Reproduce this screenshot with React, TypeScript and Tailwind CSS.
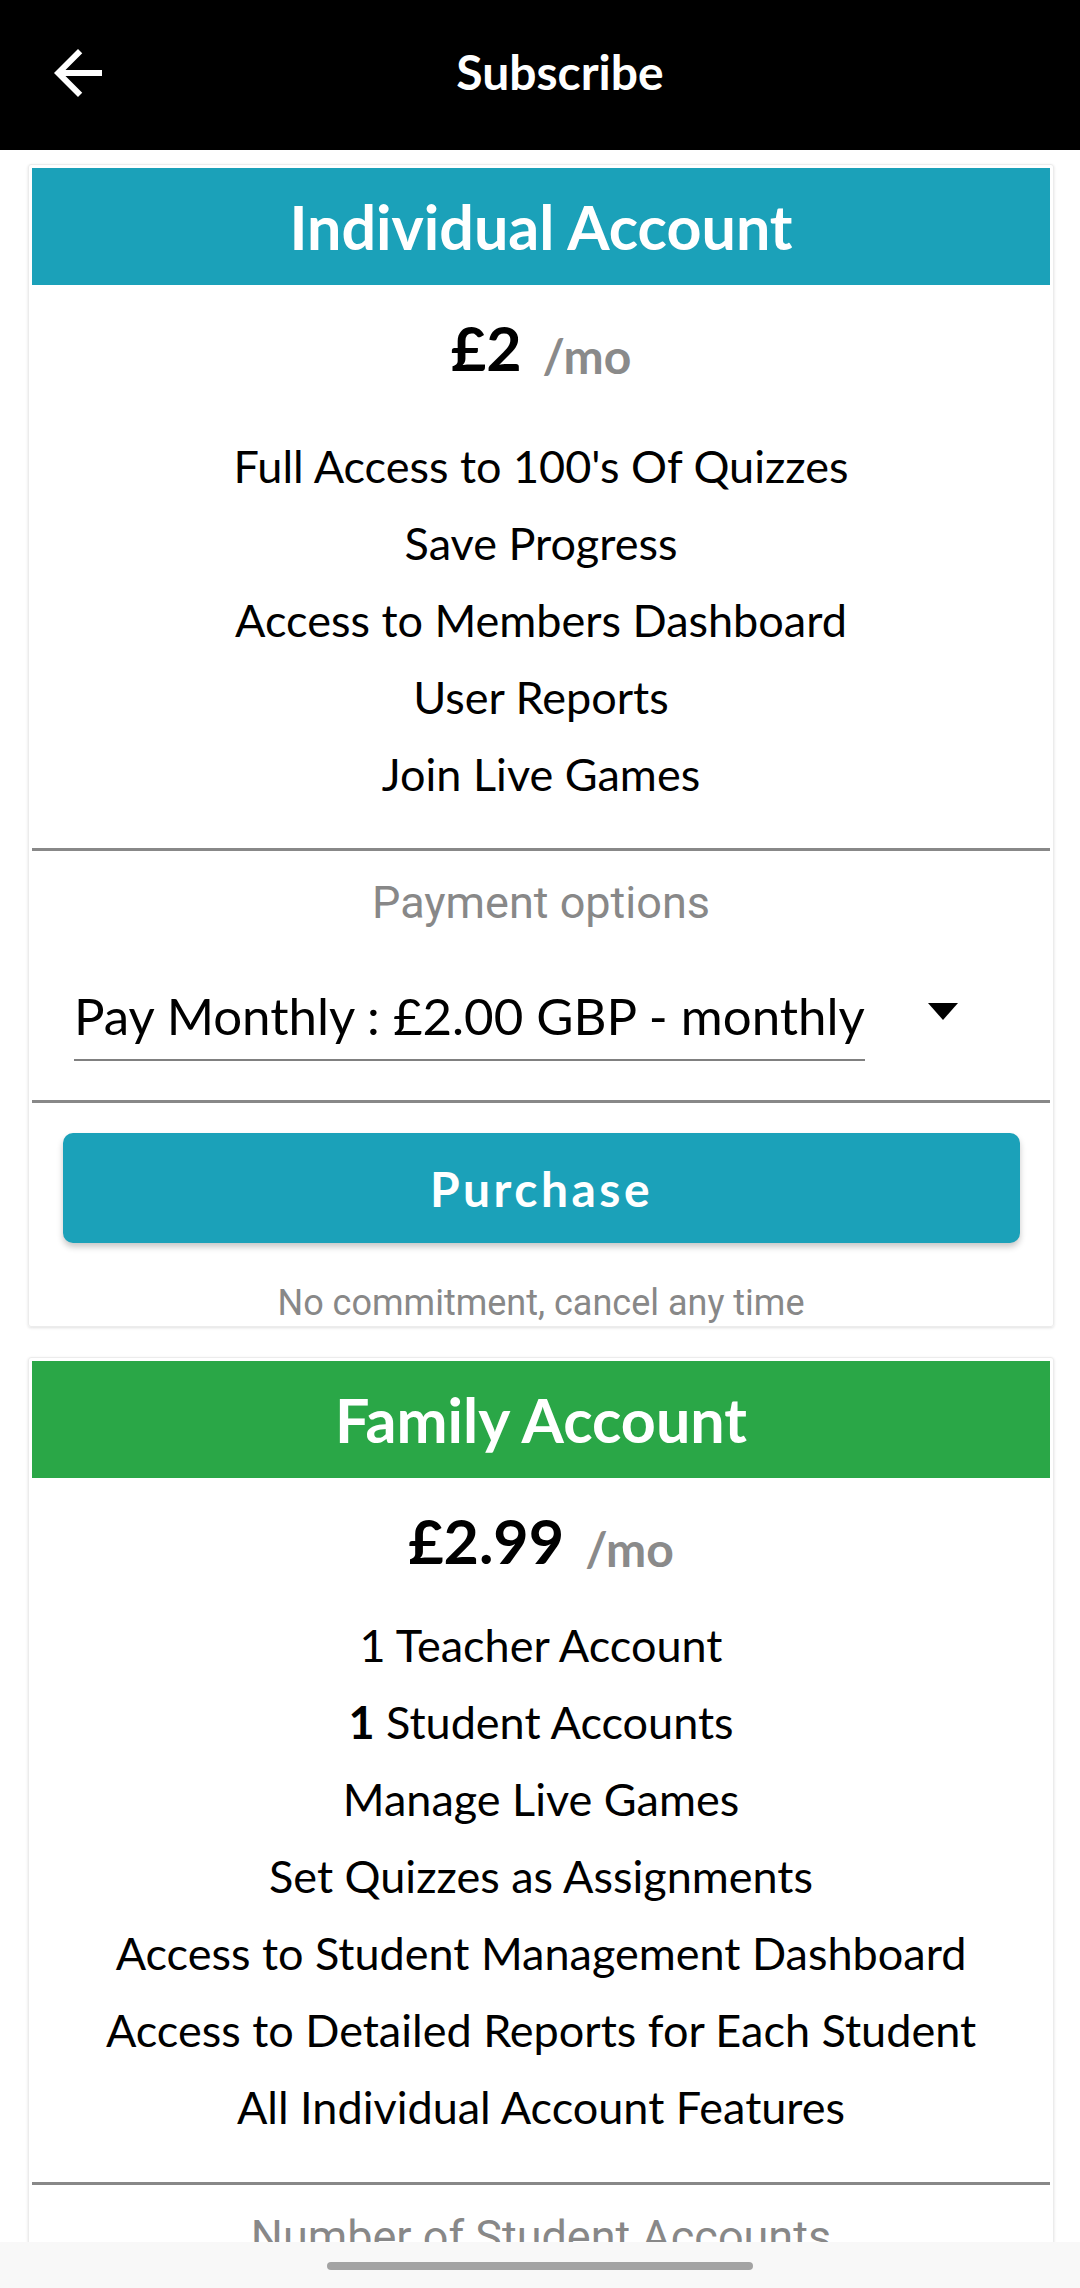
import React from "react";

const lato = "font-['Lato','Liberation_Sans',sans-serif]";
const roboto = "font-['Roboto','Liberation_Sans',sans-serif]";

function Divider() {
  return <div className="h-[3px] bg-[#888888]" />;
}

function Price({ amount }: { amount: string }) {
  return (
    <div className="flex justify-center items-end mt-[26px]">
      <span className="text-[61px] leading-[1.2] font-bold text-black">{amount}</span>
      <span className="text-[48px] leading-[1.2] font-bold text-[#8a8a8a] ml-[21px]">/mo</span>
    </div>
  );
}

function Features({ items, mt }: { items: React.ReactNode[]; mt: string }) {
  return (
    <ul className={`${mt} flex flex-col items-center`}>
      {items.map((it, i) => (
        <li key={i} className="text-[45px] leading-[77px] text-black whitespace-nowrap">
          {it}
        </li>
      ))}
    </ul>
  );
}

export default function App() {
  return (
    <div className={`relative w-[1080px] h-[2288px] overflow-hidden bg-white ${lato}`}>
      {/* Toolbar */}
      <header className="h-[150px] bg-black flex items-center pb-[6px]">
        <div className="pl-[42px] flex items-center pt-[2px]">
          <svg width="72" height="72" viewBox="0 0 24 24" fill="#ffffff">
            <path d="M20 11H7.83l5.59-5.59L12 4l-8 8 8 8 1.41-1.41L7.83 13H20v-2z" />
          </svg>
        </div>
        <h1 className="flex-1 text-center pr-[74px] text-white text-[48px] leading-[1.2] font-bold">
          Subscribe
        </h1>
      </header>

      {/* Individual card */}
      <section className="ml-[28px] mr-[26px] mt-[14px] border border-[#ececec] rounded-[3px] p-[3px] pb-[5px] shadow-[0_1px_3px_rgba(0,0,0,0.12)]">
        <div className="h-[117px] bg-[#1ba1b9] flex items-center justify-center">
          <h2 className="text-white text-[61px] leading-[1.2] font-bold">Individual Account</h2>
        </div>
        <Price amount="£2" />
        <Features
          mt="mt-[44px]"
          items={[
            "Full Access to 100's Of Quizzes",
            "Save Progress",
            "Access to Members Dashboard",
            "User Reports",
            "Join Live Games",
          ]}
        />
        <div className="mt-[35px]">
          <Divider />
        </div>
        <p className={`${roboto} mt-[26px] text-center text-[45px] leading-[52px] text-[#888888]`}>
          Payment options
        </p>
        <div className="mt-[56px] pl-[42px] flex items-start">
          <span className="inline-block text-[51px] leading-[1.2] text-black pb-[13px] border-b-[2px] border-[#808080] whitespace-nowrap">
            Pay Monthly : £2.00 GBP - monthly
          </span>
          <svg className="ml-[63px] mt-[18px]" width="30" height="17" viewBox="0 0 30 17">
            <polygon points="0,0 30,0 15,17" fill="#000000" />
          </svg>
        </div>
        <div className="mt-[39px]">
          <Divider />
        </div>
        <button className="mt-[30px] ml-[31px] mr-[30px] w-[calc(100%-61px)] h-[110px] rounded-[10px] bg-[#1ba1b9] shadow-[0_4px_6px_rgba(0,0,0,0.22)] flex items-center justify-center">
          <span className="text-white text-[48px] leading-[1.2] font-bold tracking-[3.5px]">Purchase</span>
        </button>
        <p className={`${roboto} mt-[42px] text-center text-[36px] leading-[36px] text-[#888888]`}>
          No commitment, cancel any time
        </p>
      </section>

      {/* Family card */}
      <section className="ml-[28px] mr-[26px] mt-[30px] border border-[#ececec] rounded-[3px] p-[3px] pb-0 shadow-[0_1px_3px_rgba(0,0,0,0.12)]">
        <div className="h-[117px] bg-[#2aa747] flex items-center justify-center">
          <h2 className="text-white text-[61px] leading-[1.2] font-bold">Family Account</h2>
        </div>
        <Price amount="£2.99" />
        <Features
          mt="mt-[29px]"
          items={[
            "1 Teacher Account",
            <>
              <span className="font-bold">1</span> Student Accounts
            </>,
            "Manage Live Games",
            "Set Quizzes as Assignments",
            "Access to Student Management Dashboard",
            "Access to Detailed Reports for Each Student",
            "All Individual Account Features",
          ]}
        />
        <div className="mt-[36px]">
          <Divider />
        </div>
        <p className={`${roboto} mt-[26px] text-center text-[45px] leading-[52px] text-[#888888]`}>
          Number of Student Accounts
        </p>
        <div className="h-[200px]" />
      </section>

      {/* Gesture navigation bar */}
      <div className="absolute left-0 right-0 bottom-0 h-[46px] bg-[#f8f8f8] flex justify-center">
        <div className="mt-[20px] w-[426px] h-[8px] rounded-full bg-[#a3a3a3]" />
      </div>
    </div>
  );
}
